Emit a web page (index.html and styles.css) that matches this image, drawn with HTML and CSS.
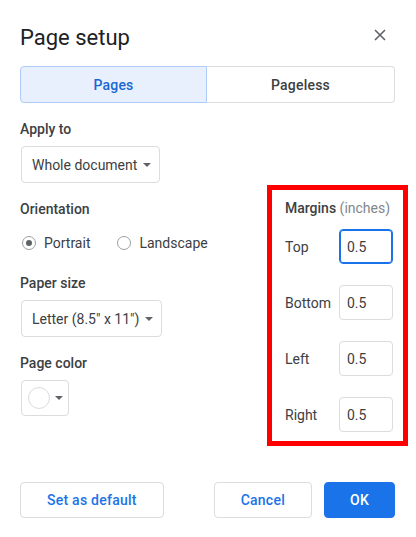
FILE: index.html
```html
<!DOCTYPE html>
<html lang="en">
<head>
<meta charset="utf-8">
<title>Page setup</title>
<link rel="stylesheet" href="styles.css">
</head>
<body>
<div class="dialog">
  <header class="head">
    <h1 class="title">Page setup</h1>
    <button class="close" aria-label="Close">
      <svg width="12" height="12" viewBox="0 0 12 12"><path d="M1 1L11 11M11 1L1 11" stroke="#5f6368" stroke-width="1.6" fill="none"/></svg>
    </button>
  </header>

  <div class="tabs">
    <button class="tab tab-active">Pages</button>
    <button class="tab">Pageless</button>
  </div>

  <div class="main">
    <div class="left">
      <div class="label">Apply to</div>
      <button class="select">Whole document<span class="caret"></span></button>

      <div class="label label-next">Orientation</div>
      <div class="radios">
        <label class="radio-item"><span class="radio radio-on"></span>Portrait</label>
        <label class="radio-item"><span class="radio"></span>Landscape</label>
      </div>

      <div class="label label-paper">Paper size</div>
      <button class="select">Letter (8.5" x 11")<span class="caret"></span></button>

      <div class="label label-next">Page color</div>
      <button class="color-select"><span class="swatch"></span><span class="caret"></span></button>
    </div>

    <div class="margins">
      <div class="margins-head"><span class="mh-strong">Margins</span> <span class="mh-unit">(inches)</span></div>
      <div class="mrow"><span class="mlabel">Top</span><span class="minput minput-focus">0.5</span></div>
      <div class="mrow"><span class="mlabel">Bottom</span><span class="minput">0.5</span></div>
      <div class="mrow"><span class="mlabel">Left</span><span class="minput">0.5</span></div>
      <div class="mrow"><span class="mlabel">Right</span><span class="minput">0.5</span></div>
    </div>
  </div>

  <footer class="foot">
    <button class="btn btn-wide">Set as default</button>
    <div class="foot-right">
      <button class="btn btn-wide">Cancel</button>
      <button class="btn btn-primary">OK</button>
    </div>
  </footer>
</div>
</body>
</html>
```

FILE: styles.css
```css
* { box-sizing: border-box; }

html, body {
  margin: 0;
  padding: 0;
  background: #ffffff;
}

body {
  font-family: Roboto, "Liberation Sans", Arial, sans-serif;
  font-size: 14px;
  line-height: 20px;
  color: #3c4043;
}

button {
  font-family: inherit;
  font-size: 14px;
  margin: 0;
  background: none;
  cursor: pointer;
}

.dialog {
  width: 416px;
  height: 537px;
  padding: 24px 21px 0 20px;
}

.head {
  display: flex;
  justify-content: space-between;
  align-items: flex-start;
  height: 28px;
}

.title {
  margin: 0;
  font-size: 22px;
  line-height: 28px;
  font-weight: 400;
  color: #202124;
  letter-spacing: 0;
}

.close {
  border: 0;
  padding: 0;
  width: 12px;
  height: 12px;
  margin: 5px 9px 0 0;
  display: block;
}

.close svg { display: block; }

.tabs {
  margin-top: 14px;
  display: grid;
  grid-template-columns: 187px 1fr;
  height: 37px;
}

.tab {
  border: 1px solid #dadce0;
  font-weight: 500;
  color: #3c4043;
  background: #fff;
  padding: 0;
  letter-spacing: 0.2px;
}

.tab:first-child {
  border-radius: 4px 0 0 4px;
}

.tab:last-child {
  border-left: 0;
  border-radius: 0 4px 4px 0;
}

.tab-active {
  background: #e8f0fe;
  border-color: #aecbfa;
  color: #1967d2;
}

.main {
  display: flex;
  justify-content: space-between;
  align-items: flex-start;
  margin-right: -13px;
}

.left {
  display: flex;
  flex-direction: column;
  align-items: flex-start;
  padding-top: 16px;
}

.label {
  font-weight: 500;
  color: #3c4043;
  height: 20px;
  margin-bottom: 7px;
}

.label-next { margin-top: 16px; }
.label-paper { margin-top: 20px; }

.select {
  display: flex;
  align-items: center;
  gap: 6px;
  height: 37px;
  padding: 0 8px 0 10px;
  margin-left: 1px;
  border: 1px solid #dadce0;
  border-radius: 4px;
  background: #fff;
  color: #3c4043;
}

.caret {
  width: 0;
  height: 0;
  border-left: 4px solid transparent;
  border-right: 4px solid transparent;
  border-top: 4px solid #5f6368;
  display: inline-block;
}

.radios {
  display: flex;
  align-items: center;
  gap: 27px;
  height: 20px;
  margin-top: 13px;
  margin-left: 2px;
  margin-top: 7px;
}

.radio-item {
  display: flex;
  align-items: center;
  gap: 8px;
  color: #3c4043;
}

.radio {
  width: 14px;
  height: 14px;
  border: 1px solid #9aa0a6;
  border-radius: 50%;
  display: inline-flex;
  align-items: center;
  justify-content: center;
}

.radio-on::after {
  content: "";
  width: 6px;
  height: 6px;
  border-radius: 50%;
  background: #5f6368;
}

.color-select {
  display: flex;
  align-items: center;
  gap: 5px;
  width: 48px;
  height: 36px;
  margin-left: 1px;
  padding: 0 0 0 6px;
  border: 1px solid #dadce0;
  border-radius: 4px;
  background: #fff;
}

.swatch {
  width: 22px;
  height: 22px;
  border: 1px solid #dadce0;
  border-radius: 50%;
  background: #fff;
}

.margins {
  margin-top: 82px;
  width: 141px;
  border: 5px solid #ff0000;
  padding: 8px 10px 9px 13px;
  display: flex;
  flex-direction: column;
  gap: 21px;
}

.margins-head {
  height: 20px;
  margin-bottom: -10px;
}

.mh-strong {
  font-weight: 500;
  color: #3c4043;
}

.mh-unit {
  color: #80868b;
}

.mrow {
  display: grid;
  grid-template-columns: 1fr 54px;
  align-items: center;
  height: 35px;
}

.mlabel {
  color: #3c4043;
}

.minput {
  height: 35px;
  border: 1px solid #dadce0;
  border-radius: 4px;
  padding-left: 7px;
  display: flex;
  align-items: center;
  color: #3c4043;
}

.minput-focus {
  border-color: #1a73e8;
  box-shadow: inset 0 0 0 1px #1a73e8;
}

.foot {
  margin-top: 36px;
  display: flex;
  justify-content: space-between;
  align-items: center;
}

.foot-right {
  display: flex;
  gap: 12px;
}

.btn {
  height: 36px;
  padding: 0 24px;
  border: 1px solid #dadce0;
  border-radius: 4px;
  background: #fff;
  color: #1a73e8;
  font-weight: 500;
  letter-spacing: 0.25px;
}

.btn-wide {
  padding: 0 26px;
}

.btn-primary {
  background: #1a73e8;
  border-color: #1a73e8;
  color: #fff;
  padding: 0 25px;
}
```
